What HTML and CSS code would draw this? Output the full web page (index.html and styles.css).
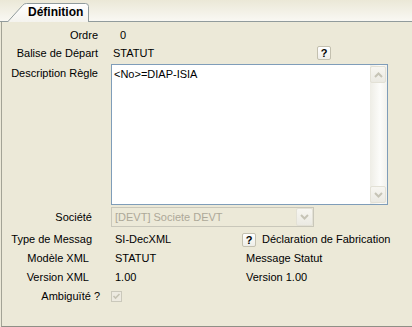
FILE: index.html
```html
<!DOCTYPE html>
<html lang="fr">
<head>
<meta charset="utf-8">
<title>Définition</title>
<link rel="stylesheet" href="styles.css">
</head>
<body>
<div class="tabs">
  <div class="tab">
    <svg class="tab-shape" width="82" height="19" viewBox="0 0 82 19">
      <defs>
        <linearGradient id="tg" x1="0" y1="0" x2="0" y2="1">
          <stop offset="0" stop-color="#FFFFFF"/>
          <stop offset="1" stop-color="#F4F3EE"/>
        </linearGradient>
      </defs>
      <path d="M0.5,19 L15.5,2.5 Q17,0.5 19.5,0.5 L78.5,0.5 Q81.5,0.5 81.5,3.5 L81.5,19" fill="url(#tg)" stroke="#919B9C" stroke-width="1"/>
    </svg>
    <span class="tab-label">Définition</span>
  </div>
</div>
<div class="panel">
  <div class="row">
    <div class="lbl pr4">Ordre</div>
    <div class="val"><span class="txt pl9">0</span></div>
  </div>
  <div class="row">
    <div class="lbl pr4">Balise de Départ</div>
    <div class="val"><span class="txt pl2 w206">STATUT</span><span class="help">?</span></div>
  </div>
  <div class="row row-desc">
    <div class="lbl pr4 lbl-top">Description Règle</div>
    <div class="val">
      <div class="memo">
        <div class="memo-text">&lt;No&gt;=DIAP-ISIA</div>
        <div class="vscroll">
          <div class="sbtn">
            <svg width="9" height="6" viewBox="0 0 9 6"><path d="M1,5 L4.5,1.5 L8,5" fill="none" stroke="#C6C4B6" stroke-width="2"/></svg>
          </div>
          <div class="strack"></div>
          <div class="sbtn">
            <svg width="9" height="6" viewBox="0 0 9 6"><path d="M1,1 L4.5,4.5 L8,1" fill="none" stroke="#C6C4B6" stroke-width="2"/></svg>
          </div>
        </div>
      </div>
    </div>
  </div>
  <div class="row row-combo">
    <div class="lbl pr10">Société</div>
    <div class="val">
      <div class="combo">
        <span class="combo-text">[DEVT] Societe DEVT</span>
        <div class="combo-btn">
          <svg width="9" height="6" viewBox="0 0 9 6"><path d="M1,1 L4.5,4.5 L8,1" fill="none" stroke="#C6C4B6" stroke-width="2"/></svg>
        </div>
      </div>
    </div>
  </div>
  <div class="row row19 first19">
    <div class="lbl pr10">Type de Messag</div>
    <div class="val"><span class="txt w131">SI-DecXML</span><span class="help">?</span><span class="txt gap6">Déclaration de Fabrication</span></div>
  </div>
  <div class="row row19">
    <div class="lbl pr13">Modèle XML</div>
    <div class="val"><span class="txt w131">STATUT</span><span class="txt">Message Statut</span></div>
  </div>
  <div class="row row19">
    <div class="lbl pr13">Version XML</div>
    <div class="val"><span class="txt w131">1.00</span><span class="txt">Version 1.00</span></div>
  </div>
  <div class="row row19">
    <div class="lbl pr2">Ambiguïté ?</div>
    <div class="val">
      <span class="check">
        <svg width="9" height="9" viewBox="0 0 9 9"><path d="M1.5,4 L3.5,6 L7.5,2" fill="none" stroke="#C6C3B3" stroke-width="1.6"/></svg>
      </span>
    </div>
  </div>
</div>
</body>
</html>
```
FILE: styles.css
```css
* { box-sizing: border-box; }

html, body {
  margin: 0;
  padding: 0;
}

body {
  width: 412px;
  height: 327px;
  overflow: hidden;
  background: #ECE9D8;
  font-family: "Liberation Sans", Arial, sans-serif;
  font-size: 11px;
  line-height: 13px;
  color: #000;
}

.tabs {
  height: 22px;
  display: flex;
  align-items: flex-end;
  padding-left: 7px;
  background: linear-gradient(#EBE8D7, #F9F8F3);
  border-bottom: 1px solid #919B9C;
}

.tab {
  position: relative;
  width: 82px;
  height: 19px;
  margin-bottom: -1px;
  z-index: 1;
  padding: 2px 0 0 21px;
}

.tab-shape {
  position: absolute;
  left: 0;
  top: 0;
  display: block;
}

.tab-label {
  position: relative;
  font-weight: bold;
  font-size: 12px;
  line-height: 14px;
}

.panel {
  margin-left: 1px;
  height: 305px;
  border-left: 1px solid #A3A396;
  border-bottom: 1px solid #8F8F86;
  padding-top: 4px;
}

.row {
  display: flex;
  align-items: center;
  height: 18px;
}

.row19 { height: 19px; }
.first19 { margin-top: 3px; }

.lbl {
  flex: none;
  width: 100px;
  text-align: right;
  white-space: nowrap;
}

.pr2 { padding-right: 2px; }
.pr4 { padding-right: 4px; }
.pr10 { padding-right: 10px; }
.pr13 { padding-right: 13px; }

.val {
  margin-left: 9px;
  display: flex;
  align-items: center;
}

.txt {
  white-space: nowrap;
  padding-left: 4px;
}

.pl9 { padding-left: 9px; }
.pl2 { padding-left: 2px; }
.w206 { width: 206px; flex: none; }
.w131 { width: 131px; flex: none; }
.gap6 { padding-left: 6px; }

.help {
  flex: none;
  width: 14px;
  height: 14px;
  border: 1px solid #C3C0AF;
  border-radius: 2px;
  background: linear-gradient(#FFFFFF, #EEEDE7);
  font-weight: bold;
  font-size: 11px;
  line-height: 12px;
  text-align: center;
}

.row-desc {
  height: 141px;
  margin-top: 2px;
  align-items: flex-start;
}

.lbl-top { padding-top: 3px; }

.memo {
  width: 277px;
  height: 141px;
  border: 1px solid #7F9DB9;
  background: #FFFFFF;
  display: flex;
}

.memo-text {
  flex: 1;
  padding: 3px 2px 0 2px;
  white-space: nowrap;
}

.vscroll {
  flex: none;
  width: 17px;
  display: flex;
  flex-direction: column;
  padding: 1px 1px 1px 0;
  background: linear-gradient(to right, #EEEDE6, #FCFCFA 60%, #F3F2EC);
}

.sbtn {
  flex: none;
  height: 17px;
  border: 1px solid #E3E1D6;
  border-radius: 2px;
  background: linear-gradient(#F7F6F1, #EBEAE3);
  display: flex;
  align-items: center;
  justify-content: center;
}

.strack { flex: 1; }

.row-combo {
  height: 20px;
  margin-top: 2px;
}

.combo {
  width: 203px;
  height: 20px;
  border: 1px solid #C9C7BA;
  display: flex;
  align-items: center;
  padding: 0 0 0 3px;
}

.combo-text {
  flex: 1;
  color: #ACA899;
  white-space: nowrap;
}

.combo-btn {
  flex: none;
  width: 17px;
  height: 18px;
  border: 1px solid #E3E1D6;
  border-radius: 2px;
  background: linear-gradient(#F7F6F1, #EBEAE3);
  display: flex;
  align-items: center;
  justify-content: center;
}

.check {
  width: 11px;
  height: 11px;
  border: 1px solid #CAC8BB;
  background: #EDEAE0;
  display: flex;
  align-items: center;
  justify-content: center;
}
```
